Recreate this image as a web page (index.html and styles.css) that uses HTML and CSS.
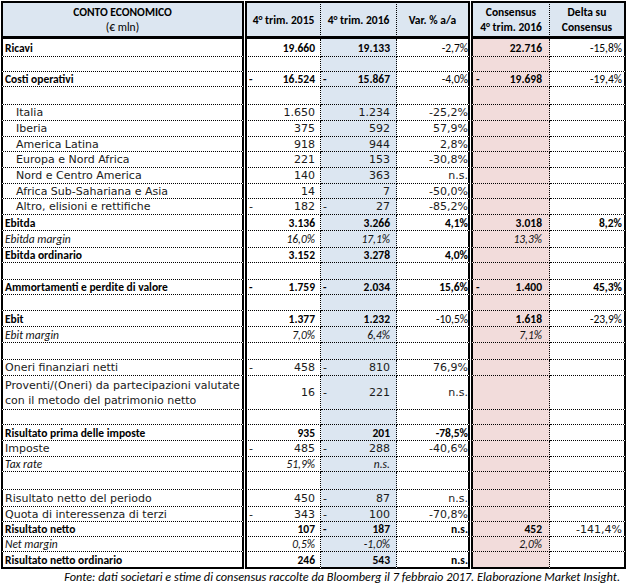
FILE: index.html
```html
<!DOCTYPE html>
<html lang="it">
<head>
<meta charset="utf-8">
<title>Conto economico</title>
<link rel="stylesheet" href="styles.css">
</head>
<body>
<div class="sheet">
  <div class="row head">
    <div class="c a hd stack"><b>CONTO ECONOMICO</b><span class="unit">(€ mln)</span></div>
    <div class="gap"></div>
    <div class="c b1 hd">4° trim. 2015</div>
    <div class="c b2 hd">4° trim. 2016</div>
    <div class="c b3 hd">Var. % a/a</div>
    <div class="gap"></div>
    <div class="c c1 hd stack"><span>Consensus</span><span>4° trim. 2016</span></div>
    <div class="c c2 hd stack"><span>Delta su</span><span>Consensus</span></div>
  </div>

  <div class="row h18 bold">
    <div class="c a">Ricavi</div><div class="gap"></div>
    <div class="c b1 n">19.660</div><div class="c b2 n">19.133</div><div class="c b3 p reg">-2,7%</div><div class="gap"></div>
    <div class="c c1 n">22.716</div><div class="c c2 p reg">-15,8%</div>
  </div>
  <div class="row">
    <div class="c a"></div><div class="gap"></div>
    <div class="c b1"></div><div class="c b2"></div><div class="c b3"></div><div class="gap"></div>
    <div class="c c1"></div><div class="c c2"></div>
  </div>
  <div class="row bold">
    <div class="c a">Costi operativi</div><div class="gap"></div>
    <div class="c b1 n"><span class="neg">-</span>16.524</div><div class="c b2 n"><span class="neg">-</span>15.867</div><div class="c b3 p reg">-4,0%</div><div class="gap"></div>
    <div class="c c1 n"><span class="neg">-</span>19.698</div><div class="c c2 p reg">-19,4%</div>
  </div>
  <div class="row h18">
    <div class="c a"></div><div class="gap"></div>
    <div class="c b1"></div><div class="c b2"></div><div class="c b3"></div><div class="gap"></div>
    <div class="c c1"></div><div class="c c2"></div>
  </div>

  <div class="row h16 plain">
    <div class="c a ind">Italia</div><div class="gap"></div>
    <div class="c b1 n">1.650</div><div class="c b2 n">1.234</div><div class="c b3 p">-25,2%</div><div class="gap"></div>
    <div class="c c1"></div><div class="c c2"></div>
  </div>
  <div class="row h16 plain">
    <div class="c a ind">Iberia</div><div class="gap"></div>
    <div class="c b1 n">375</div><div class="c b2 n">592</div><div class="c b3 p">57,9%</div><div class="gap"></div>
    <div class="c c1"></div><div class="c c2"></div>
  </div>
  <div class="row plain">
    <div class="c a ind">America Latina</div><div class="gap"></div>
    <div class="c b1 n">918</div><div class="c b2 n">944</div><div class="c b3 p">2,8%</div><div class="gap"></div>
    <div class="c c1"></div><div class="c c2"></div>
  </div>
  <div class="row h16 plain">
    <div class="c a ind">Europa e Nord Africa</div><div class="gap"></div>
    <div class="c b1 n">221</div><div class="c b2 n">153</div><div class="c b3 p">-30,8%</div><div class="gap"></div>
    <div class="c c1"></div><div class="c c2"></div>
  </div>
  <div class="row h16 plain">
    <div class="c a ind">Nord e Centro America</div><div class="gap"></div>
    <div class="c b1 n">140</div><div class="c b2 n">363</div><div class="c b3 p">n.s.</div><div class="gap"></div>
    <div class="c c1"></div><div class="c c2"></div>
  </div>
  <div class="row plain">
    <div class="c a ind">Africa Sub-Sahariana e Asia</div><div class="gap"></div>
    <div class="c b1 n">14</div><div class="c b2 n">7</div><div class="c b3 p">-50,0%</div><div class="gap"></div>
    <div class="c c1"></div><div class="c c2"></div>
  </div>
  <div class="row h16 plain">
    <div class="c a ind">Altro, elisioni e rettifiche</div><div class="gap"></div>
    <div class="c b1 n"><span class="neg">-</span>182</div><div class="c b2 n"><span class="neg">-</span>27</div><div class="c b3 p">-85,2%</div><div class="gap"></div>
    <div class="c c1"></div><div class="c c2"></div>
  </div>
  <div class="row h16 bold">
    <div class="c a">Ebitda</div><div class="gap"></div>
    <div class="c b1 n">3.136</div><div class="c b2 n">3.266</div><div class="c b3 p">4,1%</div><div class="gap"></div>
    <div class="c c1 n">3.018</div><div class="c c2 p">8,2%</div>
  </div>
  <div class="row h17 it">
    <div class="c a">Ebitda margin</div><div class="gap"></div>
    <div class="c b1 n">16,0%</div><div class="c b2 n">17,1%</div><div class="c b3 p"></div><div class="gap"></div>
    <div class="c c1 n">13,3%</div><div class="c c2"></div>
  </div>
  <div class="row bold">
    <div class="c a">Ebitda ordinario</div><div class="gap"></div>
    <div class="c b1 n">3.152</div><div class="c b2 n">3.278</div><div class="c b3 p">4,0%</div><div class="gap"></div>
    <div class="c c1"></div><div class="c c2"></div>
  </div>
  <div class="row h17">
    <div class="c a"></div><div class="gap"></div>
    <div class="c b1"></div><div class="c b2"></div><div class="c b3"></div><div class="gap"></div>
    <div class="c c1"></div><div class="c c2"></div>
  </div>
  <div class="row bold">
    <div class="c a">Ammortamenti e perdite di valore</div><div class="gap"></div>
    <div class="c b1 n"><span class="neg">-</span>1.759</div><div class="c b2 n"><span class="neg">-</span>2.034</div><div class="c b3 p">15,6%</div><div class="gap"></div>
    <div class="c c1 n"><span class="neg">-</span>1.400</div><div class="c c2 p">45,3%</div>
  </div>
  <div class="row h16">
    <div class="c a"></div><div class="gap"></div>
    <div class="c b1"></div><div class="c b2"></div><div class="c b3"></div><div class="gap"></div>
    <div class="c c1"></div><div class="c c2"></div>
  </div>
  <div class="row h16 bold">
    <div class="c a">Ebit</div><div class="gap"></div>
    <div class="c b1 n">1.377</div><div class="c b2 n">1.232</div><div class="c b3 p reg">-10,5%</div><div class="gap"></div>
    <div class="c c1 n">1.618</div><div class="c c2 p reg">-23,9%</div>
  </div>
  <div class="row h16 it">
    <div class="c a">Ebit margin</div><div class="gap"></div>
    <div class="c b1 n">7,0%</div><div class="c b2 n">6,4%</div><div class="c b3"></div><div class="gap"></div>
    <div class="c c1 n">7,1%</div><div class="c c2"></div>
  </div>
  <div class="row h17">
    <div class="c a"></div><div class="gap"></div>
    <div class="c b1"></div><div class="c b2"></div><div class="c b3"></div><div class="gap"></div>
    <div class="c c1"></div><div class="c c2"></div>
  </div>
  <div class="row h16 plain">
    <div class="c a">Oneri finanziari netti</div><div class="gap"></div>
    <div class="c b1 n"><span class="neg">-</span>458</div><div class="c b2 n"><span class="neg">-</span>810</div><div class="c b3 p">76,9%</div><div class="gap"></div>
    <div class="c c1"></div><div class="c c2"></div>
  </div>
  <div class="row h34 plain">
    <div class="c a two">Proventi/(Oneri) da partecipazioni valutate con il metodo del patrimonio netto</div><div class="gap"></div>
    <div class="c b1 n">16</div><div class="c b2 n"><span class="neg">-</span>221</div><div class="c b3 p">n.s.</div><div class="gap"></div>
    <div class="c c1"></div><div class="c c2"></div>
  </div>
  <div class="row">
    <div class="c a"></div><div class="gap"></div>
    <div class="c b1"></div><div class="c b2"></div><div class="c b3"></div><div class="gap"></div>
    <div class="c c1"></div><div class="c c2"></div>
  </div>
  <div class="row h16 bold">
    <div class="c a">Risultato prima delle imposte</div><div class="gap"></div>
    <div class="c b1 n">935</div><div class="c b2 n">201</div><div class="c b3 p">-78,5%</div><div class="gap"></div>
    <div class="c c1"></div><div class="c c2"></div>
  </div>
  <div class="row h16 plain">
    <div class="c a">Imposte</div><div class="gap"></div>
    <div class="c b1 n"><span class="neg">-</span>485</div><div class="c b2 n"><span class="neg">-</span>288</div><div class="c b3 p">-40,6%</div><div class="gap"></div>
    <div class="c c1"></div><div class="c c2"></div>
  </div>
  <div class="row it">
    <div class="c a">Tax rate</div><div class="gap"></div>
    <div class="c b1 n">51,9%</div><div class="c b2 n">n.s.</div><div class="c b3"></div><div class="gap"></div>
    <div class="c c1"></div><div class="c c2"></div>
  </div>
  <div class="row h18">
    <div class="c a"></div><div class="gap"></div>
    <div class="c b1"></div><div class="c b2"></div><div class="c b3"></div><div class="gap"></div>
    <div class="c c1"></div><div class="c c2"></div>
  </div>
  <div class="row h17 plain">
    <div class="c a">Risultato netto del periodo</div><div class="gap"></div>
    <div class="c b1 n">450</div><div class="c b2 n"><span class="neg">-</span>87</div><div class="c b3 p">n.s.</div><div class="gap"></div>
    <div class="c c1"></div><div class="c c2"></div>
  </div>
  <div class="row plain">
    <div class="c a">Quota di interessenza di terzi</div><div class="gap"></div>
    <div class="c b1 n"><span class="neg">-</span>343</div><div class="c b2 n"><span class="neg">-</span>100</div><div class="c b3 p">-70,8%</div><div class="gap"></div>
    <div class="c c1"></div><div class="c c2"></div>
  </div>
  <div class="row bold">
    <div class="c a">Risultato netto</div><div class="gap"></div>
    <div class="c b1 n">107</div><div class="c b2 n"><span class="neg">-</span>187</div><div class="c b3 p">n.s.</div><div class="gap"></div>
    <div class="c c1 n">452</div><div class="c c2 p vera">-141,4%</div>
  </div>
  <div class="row it">
    <div class="c a">Net margin</div><div class="gap"></div>
    <div class="c b1 n">0,5%</div><div class="c b2 n">-1,0%</div><div class="c b3"></div><div class="gap"></div>
    <div class="c c1 n">2,0%</div><div class="c c2"></div>
  </div>
  <div class="row h17 bold last">
    <div class="c a">Risultato netto ordinario</div><div class="gap"></div>
    <div class="c b1 n">246</div><div class="c b2 n">543</div><div class="c b3 p">n.s.</div><div class="gap"></div>
    <div class="c c1"></div><div class="c c2"></div>
  </div>

  <p class="note">Fonte: dati societari e stime di consensus raccolte da Bloomberg il 7 febbraio 2017. Elaborazione Market Insight.</p>
</div>
</body>
</html>
```

FILE: styles.css
```css
body {
  margin: 0;
  background: #fff;
  color: #000;
  font-family: Carlito, Calibri, Lato, "Liberation Sans", sans-serif;
  font-size: 11.5px;
}

.sheet {
  padding: 1px 0 0 1px;
  width: 625px;
}

.row {
  display: flex;
  height: 15px;
}
.row.h16 { height: 16px; }
.row.h17 { height: 17px; }
.row.h18 { height: 18px; }
.row.h34 { height: 34px; }

.c {
  box-sizing: border-box;
  height: 100%;
  display: flex;
  align-items: center;
  border-bottom: 1px dotted #000;
  white-space: nowrap;
  overflow: hidden;
}

.gap { width: 1px; flex: none; }

.a  { width: 243px; border-left: 2px solid #000; border-right: 2px solid #000; padding-left: 2px; }
.b1 { width: 76px; border-left: 2px solid #000; border-right: 1px dotted #000; padding-left: 2px; }
.b2 { width: 76px; border-right: 1px dotted #000; background: #dce6f1; padding-left: 2px; }
.b3 { width: 73px; border-right: 2px solid #000; }
.c1 { width: 79px; border-left: 2px solid #000; border-right: 1px dotted #000; background: #f2dcdb; padding-left: 3px; }
.c2 { width: 76px; border-right: 2px solid #000; }

.n { justify-content: flex-end; }
.b1.n { padding-right: 5px; }
.b2.n { padding-right: 6px; }
.c1.n { padding-right: 7px; }
.p { justify-content: flex-end; padding-right: 0; }
.c2.p { padding-right: 2px; }
.neg { margin-right: auto; }

.bold { font-weight: 700; }
.it { font-style: italic; color: #111; }
.plain .c,
.c.vera {
  font-family: "DejaVu Sans", Verdana, sans-serif;
  font-size: 11px;
  font-weight: 400;
  color: #1a1a1a;
}
.ind { padding-left: 13px; }
.two { white-space: normal; line-height: 15px; padding-right: 0; }
.reg { font-weight: 400; }

.head { height: 38px; }
.head .c {
  border-top: 2px solid #000;
  border-bottom: 3px solid #000;
  background: #dce6f1;
  justify-content: center;
  text-align: center;
  font-weight: 700;
  font-size: 11.5px;
  padding: 0;
}
.head .stack {
  flex-direction: column;
  justify-content: center;
  line-height: 15px;
}
.head .unit { font-weight: 400; }

.last .c { border-bottom: 2px solid #000; }

.note {
  margin: 0;
  padding-right: 6px;
  text-align: right;
  font-style: italic;
  font-size: 12.3px;
  line-height: 16px;
}
```
